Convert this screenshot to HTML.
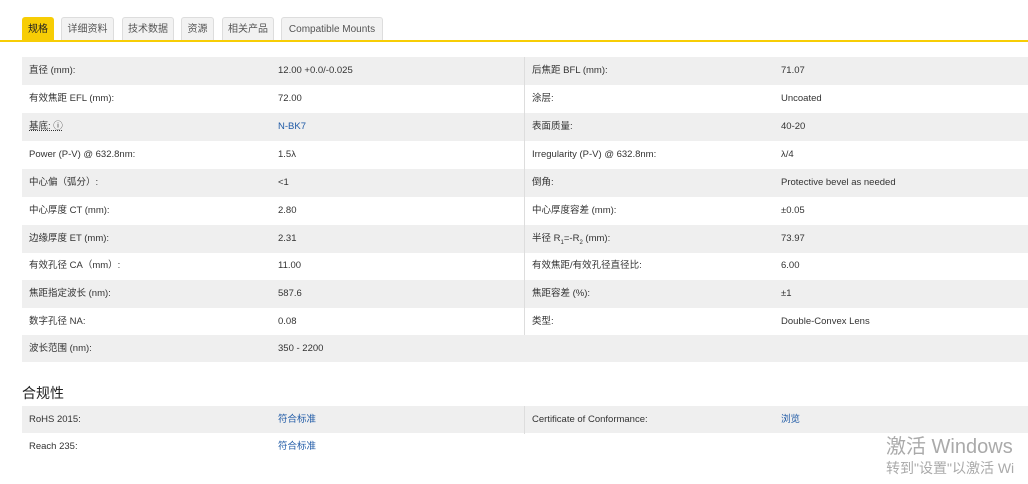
<!DOCTYPE html>
<html><head><meta charset="utf-8"><style>
body{margin:0;width:1028px;height:484px;overflow:hidden;background:#fff;font-family:"Liberation Sans","Noto Sans CJK SC",sans-serif;color:#333;position:relative}
.tab{position:absolute;top:17px;height:23px;box-sizing:border-box;background:#f2f2f2;border:1px solid #ddd;border-bottom:none;border-radius:3px 3px 0 0;font-size:10px;line-height:23px;text-align:center;color:#555}
.tab.on{background:#f7cd05;border-color:#f7cd05;color:#222}
.line{position:absolute;left:0;top:40px;width:1028px;height:2px;background:#f7cd05}
.row{position:absolute;left:22px;width:1006px;height:28px;font-size:9.5px;line-height:28px;color:#333}
.row.g{background:#efefef}
.row span{position:absolute;top:0}
.a{left:7px}.b{left:256px}.c{left:510px}.d{left:759px}
.dv{position:absolute;left:502px;top:0;width:1px;height:28px;background:#ddd}
.lk{color:#1f5aa6}
h3{position:absolute;left:22px;top:383px;margin:0;font-size:14px;font-weight:normal;color:#222}
.wm{position:absolute;left:886px;color:#aaa;white-space:nowrap}
</style></head><body>
<div class="tab on" style="left:22px;width:32px">规格</div>
<div class="tab" style="left:61px;width:53px">详细资料</div>
<div class="tab" style="left:122px;width:52px">技术数据</div>
<div class="tab" style="left:181px;width:33px">资源</div>
<div class="tab" style="left:222px;width:52px">相关产品</div>
<div class="tab" style="left:281px;width:102px">Compatible Mounts</div>
<div class="line"></div>

<div class="row g" style="top:57px"><span class="a">直径 (mm):</span><span class="b">12.00 +0.0/-0.025</span><div class="dv"></div><span class="c">后焦距 BFL (mm):</span><span class="d">71.07</span></div>
<div class="row" style="top:85px"><span class="a">有效焦距 EFL (mm):</span><span class="b">72.00</span><div class="dv"></div><span class="c">涂层:</span><span class="d">Uncoated</span></div>
<div class="row g" style="top:113px"><span class="a" style="text-decoration:underline dotted">基底: ⓘ</span><span class="b lk">N-BK7</span><div class="dv"></div><span class="c">表面质量:</span><span class="d">40-20</span></div>
<div class="row" style="top:141px"><span class="a">Power (P-V) @ 632.8nm:</span><span class="b">1.5λ</span><div class="dv"></div><span class="c">Irregularity (P-V) @ 632.8nm:</span><span class="d">λ/4</span></div>
<div class="row g" style="top:169px"><span class="a">中心偏（弧分）:</span><span class="b">&lt;1</span><div class="dv"></div><span class="c">倒角:</span><span class="d">Protective bevel as needed</span></div>
<div class="row" style="top:197px"><span class="a">中心厚度 CT (mm):</span><span class="b">2.80</span><div class="dv"></div><span class="c">中心厚度容差 (mm):</span><span class="d">±0.05</span></div>
<div class="row g" style="top:225px"><span class="a">边缘厚度 ET (mm):</span><span class="b">2.31</span><div class="dv"></div><span class="c">半径 R<sub style="font-size:6px">1</sub>=-R<sub style="font-size:6px">2</sub> (mm):</span><span class="d">73.97</span></div>
<div class="row" style="top:252px"><span class="a">有效孔径 CA（mm）:</span><span class="b">11.00</span><div class="dv"></div><span class="c">有效焦距/有效孔径直径比:</span><span class="d">6.00</span></div>
<div class="row g" style="top:280px"><span class="a">焦距指定波长 (nm):</span><span class="b">587.6</span><div class="dv"></div><span class="c">焦距容差 (%):</span><span class="d">±1</span></div>
<div class="row" style="top:308px"><span class="a">数字孔径 NA:</span><span class="b">0.08</span><div class="dv"></div><span class="c">类型:</span><span class="d">Double-Convex Lens</span></div>
<div class="row g" style="top:335px;height:27px"><span class="a">波长范围 (nm):</span><span class="b">350 - 2200</span></div>

<h3>合规性</h3>
<div class="row g" style="top:406px;height:27px"><span class="a">RoHS 2015:</span><span class="b lk">符合标准</span><div class="dv"></div><span class="c">Certificate of Conformance:</span><span class="d lk">浏览</span></div>
<div class="row" style="top:433px;height:27px"><span class="a">Reach 235:</span><span class="b lk">符合标准</span></div>

<div class="wm" style="top:430px;font-size:20px">激活 Windows</div>
<div class="wm" style="top:458px;font-size:14px">转到"设置"以激活 Wi</div>
</body></html>
